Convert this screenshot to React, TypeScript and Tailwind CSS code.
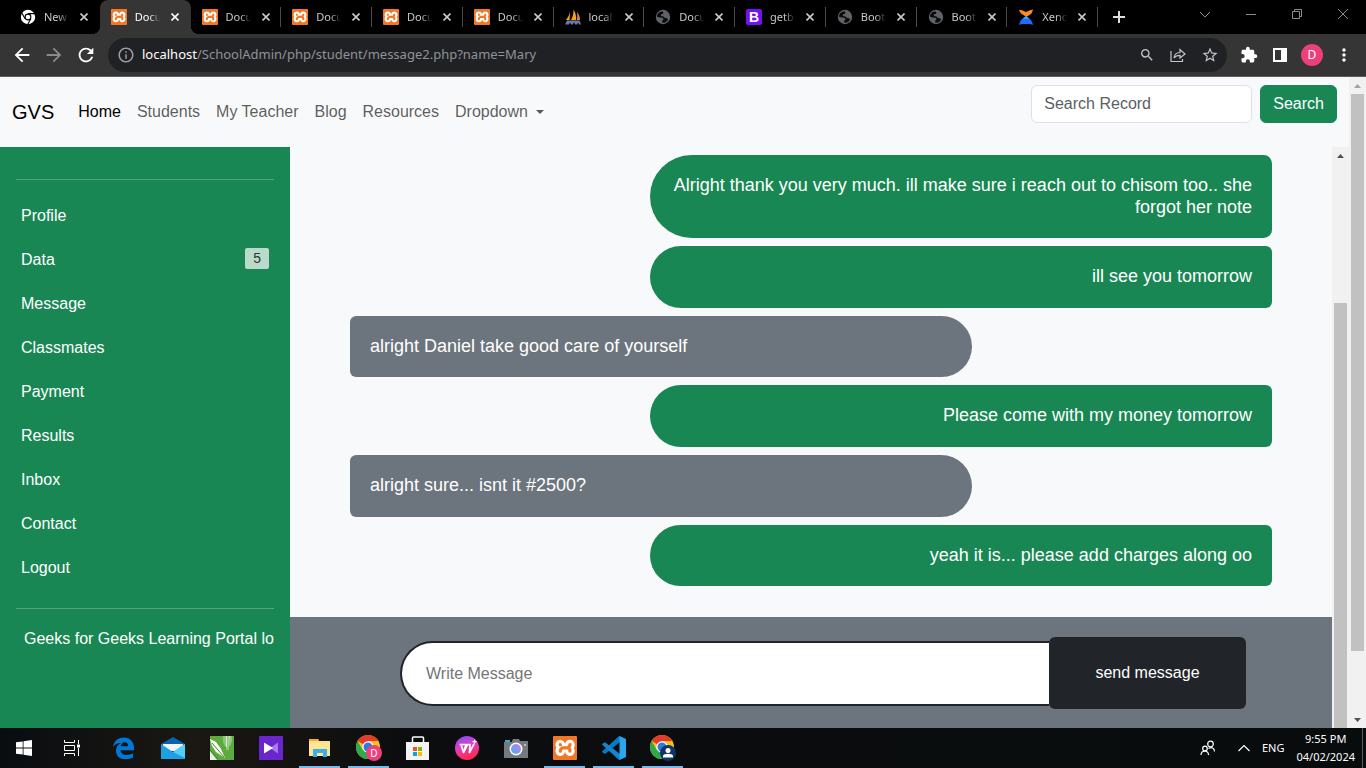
import React from "react";
import type { ReactNode } from "react";
import { MdArrowBack, MdArrowForward, MdExtension, MdInfoOutline, MdMoreVert, MdRefresh, MdSearch, MdStarBorder } from "react-icons/md";
import { SiXampp } from "react-icons/si";

const XamppIcon = ({ className }: { className: string }) => (
  <span className={`relative block overflow-hidden rounded-xs bg-white ${className}`}>
    <SiXampp className="size-full scale-110 text-[#f37623]" />
  </span>
);

const ChromeMono = () => (
  <svg viewBox="0 0 16 16" className="size-4">
    <circle cx="8" cy="8" r="7.2" fill="#fff" />
    <circle cx="8" cy="8" r="3.4" fill="#000" />
    <circle cx="8" cy="8" r="2.3" fill="#fff" />
    <g stroke="#000" strokeWidth="1.1">
      <path d="M8 4.6h7.2M5.1 9.8 1.5 3.5M10.9 9.8l-3.5 6" />
    </g>
  </svg>
);

const Sails = () => (
  <svg viewBox="0 0 16 16" className="size-4">
    <path d="M5 2 4.6 11H.8C3 8.500 4.500 5.500 5 2Z" fill="#f89c0e" />
    <path d="M8.500 0.500c2 3 3 6.500 2.700 10.500H6c1.800-3 2.700-6.500 2.500-10.500Z" fill="#f6a11c" />
    <path d="M12 3c2 2 3 5 3 8h-3c.4-3 .4-5.500 0-8Z" fill="#e98a12" />
    <path d="M0 15.500 2 11.500h12.500l1.500 4h-2l-1-2-1 2h-2l-1-2.500-1 2.500H6l-1-2-1 2Z" fill="#6c78af" />
  </svg>
);

const Globe = () => (
  <svg viewBox="0 0 16 16" className="size-4">
    <circle cx="8" cy="8" r="7.2" fill="#5f6368" />
    <path d="M7.500 2.200c-3 .2-5.500 2.500-5.500 5.500l3 .8c1.500.2 3 .2 3.500 1.300.3 1-1.300 1.500-1.300 2.600l.1 1.400c2.500.3 4.700-1 5.700-3.300-.6-1-1.200-1.500-2.500-1.500-1.500-.2-1.500-1.500-3-1.700-1-.2-1.700-.4-1.700-1.300 0-1.200 2.500-.6 2.700-1.900Z" fill="#0a0a0a" />
  </svg>
);

const BootstrapIcon = () => (
  <span className="grid size-4 place-items-center rounded-xs bg-[#7411f4] font-['Liberation_Sans',sans-serif] text-sm font-bold leading-none text-white">B</span>
);

const XenderIcon = () => (
  <svg viewBox="0 0 16 16" className="size-4">
    <path d="M.8.800 4 1.200 8 3l4-1.800L15.200.500 13.500 4.500 8.500 8 3 4.500Z" fill="#ff8a1d" />
    <path d="m8 7 5 4 2.200 4.800L11.500 15h-7L.8 15.800 3 11Z" fill="#1f6bff" />
    <path d="m8 7 3.500 2.800h-7Z" fill="#41a8f5" />
  </svg>
);

type BrowserTab = { title: string; icon: ReactNode; active?: boolean; divider?: boolean };

const browserTabs: BrowserTab[] = [
  { title: "New", icon: <ChromeMono /> },
  { title: "Docu", icon: <XamppIcon className="size-4" />, active: true },
  { title: "Docu", icon: <XamppIcon className="size-4" />, divider: true },
  { title: "Docu", icon: <XamppIcon className="size-4" />, divider: true },
  { title: "Docu", icon: <XamppIcon className="size-4" />, divider: true },
  { title: "Docu", icon: <XamppIcon className="size-4" />, divider: true },
  { title: "local", icon: <Sails />, divider: true },
  { title: "Docu", icon: <Globe />, divider: true },
  { title: "getb", icon: <BootstrapIcon />, divider: true },
  { title: "Boot", icon: <Globe />, divider: true },
  { title: "Boot", icon: <Globe />, divider: true },
  { title: "Xend", icon: <XenderIcon />, divider: true },
];

const CloseGlyph = () => (
  <svg viewBox="0 0 8 8" className="size-2" stroke="currentColor" strokeWidth="1.600">
    <path d="m0.500.5 7 7m0-7-7 7" />
  </svg>
);

function TabStrip() {
  return (
    <header className="flex h-[34px] shrink-0 bg-black pl-[9px] text-[#c8c9cb]">
      <div className="flex min-w-0 max-w-[1089px] flex-1">
        {browserTabs.map((tab, i) => (
          <div
            key={i}
            className={`relative flex min-w-0 flex-1 items-center pl-[11px] ${tab.active ? "rounded-t-lg bg-[#353535] text-white" : ""}`}
          >
            {tab.icon}
            <span className="ml-2 w-7 whitespace-nowrap text-[11px] [mask-image:linear-gradient(to_right,black_50%,transparent_90%)]">{tab.title}</span>
            <button aria-label="Close tab" className="ml-2 shrink-0"><CloseGlyph /></button>
            {tab.divider && <span className="ml-auto h-5 w-px bg-[#4a4a4a]" />}
            {tab.active && (
              <>
                <span className="absolute -left-2 bottom-0 size-2 bg-[radial-gradient(circle_at_0_0,black_8px,#353535_8px)]" />
                <span className="absolute -right-2 bottom-0 size-2 bg-[radial-gradient(circle_at_100%_0,black_8px,#353535_8px)]" />
              </>
            )}
          </div>
        ))}
      </div>
      <button aria-label="New tab" className="ml-[15px] self-center text-[#dedede]">
        <svg viewBox="0 0 12 12" className="size-3" stroke="currentColor" strokeWidth="2"><path d="M6 0v12M0 6h12" /></svg>
      </button>
      <div className="ml-auto flex h-7 items-center text-[#8c8c8c]">
        {[
          ["Search tabs", "M1 4l5 5 5-5"],
          ["Minimize", "M1 6.500h10"],
          ["Restore", "M1.500 3.500h7v7h-7zM3.500 3.500v-2h7v7h-2"],
          ["Close", "M1 1l10 10M11 1 1 11"],
        ].map(([label, d]) => (
          <button key={label} aria-label={label} className="grid w-[46px] place-items-center">
            <svg viewBox="0 0 12 12" className="size-3" fill="none" stroke="currentColor"><path d={d} /></svg>
          </button>
        ))}
      </div>
    </header>
  );
}

function Toolbar() {
  return (
    <div className="flex h-[43px] shrink-0 items-center border-b border-[#5c5c60] bg-[#353535] pr-3 text-white">
      <div className="flex items-center gap-2.5 pl-[11px]">
        <button aria-label="Back"><MdArrowBack className="size-[22px]" /></button>
        <button aria-label="Forward" className="text-[#8b8b8b]"><MdArrowForward className="size-[22px]" /></button>
        <button aria-label="Reload"><MdRefresh className="size-[22px]" /></button>
      </div>
      <div className="ml-[11px] flex h-[34px] min-w-0 flex-1 items-center rounded-full bg-[#202124] pl-2 pr-2 text-[#9aa0a6]">
        <MdInfoOutline className="size-5 shrink-0 p-px" />
        <p className="ml-1.5 flex-1 truncate text-[13px] text-[#8f9397]"><span className="text-white">localhost</span>/SchoolAdmin/php/student/message2.php?name=Mary</p>
        <div className="flex items-center gap-[15px] text-[#c3c5c8]">
          <button aria-label="Zoom"><MdSearch className="size-4" /></button>
          <button aria-label="Share">
            <svg viewBox="0 0 16 16" className="size-4" fill="none" stroke="currentColor" strokeWidth="1.200">
              <path d="M1 4v10.500h11.500V12M4 11c.5-3.500 2.500-5.500 6-5.500V2.500L15 7l-5 4V8.300C7.500 8.300 5.500 9 4 11Z" />
            </svg>
          </button>
          <button aria-label="Bookmark"><MdStarBorder className="size-[18px]" /></button>
        </div>
      </div>
      <div className="ml-3 flex items-center gap-[11px]">
        <button aria-label="Extensions" className="p-px"><MdExtension className="size-[18px]" /></button>
        <button aria-label="Side panel" className="p-0.5">
          <svg viewBox="0 0 16 16" className="size-4"><path fill="currentColor" fillRule="evenodd" d="M1 1h14v14H1ZM3 3v10h6V3Z" /></svg>
        </button>
        <button aria-label="Account" className="size-[22px] rounded-full bg-[#ec407a] text-xs">D</button>
        <button aria-label="More"><MdMoreVert className="size-5" /></button>
      </div>
    </div>
  );
}

function ScrollArrow({ down, faint }: { down?: boolean; faint?: boolean }) {
  return (
    <svg viewBox="0 0 17 17" className={`size-[17px] shrink-0 ${faint ? "text-[#a3a3a3]" : "text-[#505050]"}`}>
      <path fill="currentColor" d={down ? "M5 7h7l-3.500 4Z" : "M5 11h7L8.500 7Z"} />
    </svg>
  );
}

function Navbar() {
  return (
    <nav className="flex h-[70px] shrink-0 items-center bg-[#f8f9fa] px-3 text-base text-black/65">
      <a href="#" className="mr-4 text-xl text-black">GVS</a>
      <a href="#" className="px-2 text-black">Home</a>
      <a href="#" className="px-2">Students</a>
      <a href="#" className="px-2">My Teacher</a>
      <a href="#" className="px-2">Blog</a>
      <a href="#" className="px-2">Resources</a>
      <button className="flex items-center gap-2 px-2">
        Dropdown
        <span className="border-x-4 border-t-4 border-x-transparent border-t-current" />
      </button>
      <form className="ml-auto flex gap-2 self-start pt-2" onSubmit={(e) => e.preventDefault()}>
        <input
          type="search"
          aria-label="Search Record"
          placeholder="Search Record"
          className="h-[38px] w-[221px] rounded-md border border-[#dee2e6] bg-white px-3 text-[#212529] placeholder:text-[#5b6066]"
        />
        <button className="h-[38px] rounded-md border border-[#198754] bg-[#198754] px-3 text-white">Search</button>
      </form>
    </nav>
  );
}

const menu = ["Profile", "Data", "Message", "Classmates", "Payment", "Results", "Inbox", "Contact", "Logout"];

function Sidebar() {
  return (
    <aside className="w-[290px] shrink-0 overflow-hidden bg-[#198754] px-4 pt-8 text-white">
      <hr className="mb-[14px] border-white/25" />
      <ul>
        {menu.map((item) => (
          <li key={item}>
            <a href="#" className="flex h-11 items-start justify-between px-[5px] py-2.5 leading-6">
              {item}
              {item === "Data" && <span className="rounded-xs bg-[#badbcc] px-2 text-sm leading-[21px] text-[#333]">5</span>}
            </a>
          </li>
        ))}
      </ul>
      <hr className="mt-[18px] mb-[18px] border-white/25" />
      <p className="overflow-hidden whitespace-nowrap pl-2 leading-6">Geeks for Geeks Learning Portal lo</p>
    </aside>
  );
}

const messages = [
  { mine: true, text: "Alright thank you very much. ill make sure i reach out to chisom too.. she forgot her note" },
  { mine: true, text: "ill see you tomorrow" },
  { mine: false, text: "alright Daniel take good care of yourself" },
  { mine: true, text: "Please come with my money tomorrow" },
  { mine: false, text: "alright sure... isnt it #2500?" },
  { mine: true, text: "yeah it is... please add charges along oo" },
];

function Chat() {
  return (
    <main className="flex min-w-0 flex-1 flex-col bg-[#f8f9fa]">
      <div className="flex min-h-0 flex-1 flex-col gap-2 overflow-hidden px-[60px] pt-2">
        {messages.map((m, i) => (
          <p
            key={i}
            className={`w-[622px] max-w-full p-5 text-lg leading-[1.2] text-white ${
              m.mine ? "self-end rounded-l-[50px] rounded-r-[10px] bg-[#198754] text-right" : "rounded-l-[10px] rounded-r-[50px] bg-[#6c757d]"
            }`}
          >
            {m.text}
          </p>
        ))}
      </div>
      <form className="flex h-[111px] shrink-0 items-start bg-[#6c757d] pl-[110px] pr-[86px] pt-5" onSubmit={(e) => e.preventDefault()}>
        <input
          type="text"
          aria-label="Write Message"
          placeholder="Write Message"
          className="mt-1 h-[65px] min-w-0 flex-1 rounded-l-[50px] border-2 border-r-0 border-[#212529] bg-white px-6 text-[#212529] placeholder:text-[#757575]"
        />
        <button className="h-[72px] w-[197px] rounded-md bg-[#212529] text-white">send message</button>
      </form>
    </main>
  );
}

const ChromeColor = ({ children }: { children: ReactNode }) => (
  <svg viewBox="0 0 26 26" className="size-[26px]">
    <circle cx="12" cy="12" r="12" fill="#fbc116" />
    <path d="M12 12 1.600 6A12 12 0 0 1 22.400 6H12Z" fill="#e33b2e" />
    <path d="M1.600 6A12 12 0 0 0 12 24L17.200 15 12 12 6.800 15Z" fill="#2da94f" />
    <circle cx="12" cy="12" r="5.700" fill="#fff" />
    <circle cx="12" cy="12" r="4.500" fill="#2c7be5" />
    {children}
  </svg>
);

const EdgeIcon = () => (
  <svg viewBox="0 0 24 24" className="size-6">
    <path fill="#0078d7" d="M1 11C2 5 6 1.500 12 1.500c6 0 10 4.500 10 10.500v2.200H8.500c.3 3.300 3 4.800 6.200 4.800 2.300 0 4.500-.6 6.300-1.700v4.300c-2 1.200-4.700 1.700-7.300 1.700C7.500 23.300 4 20 4 14.800c0-3.500 2-6.500 5-8C5.500 7.200 2.500 8.500 1 11Zm7.700-.8h7.500c0-2.500-1.300-4-3.600-4-2.100 0-3.500 1.700-3.900 4Z" />
  </svg>
);

const MailIcon = () => (
  <svg viewBox="0 0 24 24" className="size-6">
    <path d="M0 8 12 1l12 7v4H0Z" fill="#0a63ad" />
    <path d="M2 8h20v7H2Z" fill="#f3f3f3" />
    <path d="M0 8l12 8 12-8v15H0Z" fill="#1ea0e6" />
    <path d="m12 16 12-8v14Z" fill="#4fd0f4" />
  </svg>
);

const CorelIcon = () => (
  <svg viewBox="0 0 24 24" className="size-6">
    <path d="M0 0h24v24H0Z" fill="#5dab3c" />
    <path d="M13 0h9c1 5-1 9-3 11v3h-3v-3c-2-2-4-6-3-11Z" fill="#8fc77a" />
    <path d="M16 0h1v11h-1ZM19 0h1l-2 11Z" fill="#d7edcf" />
    <path d="m0 3 6 3 5 7 4 9-9-6-4-6Z" fill="#fff" />
    <path d="m2 7 12 14M0 14l8 9" stroke="#3f8525" fill="none" />
    <path d="M0 15l7 9H0Z" fill="#e8f4e3" />
  </svg>
);

const PlayerIcon = () => (
  <svg viewBox="0 0 24 24" className="size-6">
    <rect width="24" height="24" rx="1" fill="#6a26cd" />
    <path d="m19 6.500-8 5.500 8 5.500Z" fill="#a67be6" />
    <path d="M5 6.500v11l9-5.500Z" fill="#fff" />
  </svg>
);

const FolderIcon = () => (
  <svg viewBox="0 0 24 24" className="size-6">
    <path d="M1 3h9l1 2h11v15H1Z" fill="#ffe08a" />
    <path d="M1 3h9l1 2H1Z" fill="#f4b02c" />
    <path d="M1 7h21v13H1Z" fill="#ffe694" />
    <path d="M5 13h14v8h-4v-4H9v4H5Z" fill="#39b0e8" />
  </svg>
);

const StoreIcon = () => (
  <svg viewBox="0 0 24 24" className="size-6">
    <path d="M6.500 7V2q0-1 1-1h9q1 0 1 1v5" fill="none" stroke="#fff" strokeWidth="1.500" />
    <path d="M0 6h23v18H0Z" fill="#f3f3f3" />
    <path d="M7 11h4v4H7Z" fill="#f25022" />
    <path d="M12 11h4v4h-4Z" fill="#7fba00" />
    <path d="M7 16h4v4H7Z" fill="#00a4ef" />
    <path d="M12 16h4v4h-4Z" fill="#ffb900" />
  </svg>
);

const WpsIcon = () => (
  <svg viewBox="0 0 24 24" className="size-6">
    <defs>
      <linearGradient id="wps" x1="0" y1="0" x2="0.300" y2="1">
        <stop offset="0" stopColor="#7a4dff" />
        <stop offset="0.500" stopColor="#e03fc4" />
        <stop offset="1" stopColor="#ff2a4d" />
      </linearGradient>
    </defs>
    <circle cx="12" cy="12" r="12" fill="url(#wps)" />
    <path d="M4.500 8.500h6.500L8.500 16.500 6 8.500M8.500 16.500 12.500 8.500H15L14.500 16.500 19 8" fill="none" stroke="#fff" strokeWidth="1.700" strokeLinejoin="round" />
    <path d="m19.500 3 .7 2 2 .7-2 .7-.7 2-.7-2-2-.7 2-.7Z" fill="#fff" />
  </svg>
);

const CameraIcon = () => (
  <svg viewBox="0 0 24 24" className="size-6">
    <defs>
      <linearGradient id="lens" x1="1" y1="0" x2="0" y2="1">
        <stop offset="0" stopColor="#d977e8" />
        <stop offset="1" stopColor="#35b8f2" />
      </linearGradient>
    </defs>
    <path d="M1 4h5v3H1Z" fill="#39a6dc" />
    <path d="M8 5l1-2h6l1 2h8v17H0V6h8Z" fill="#737a80" />
    <circle cx="12" cy="13" r="6.500" fill="#fff" />
    <circle cx="12" cy="13" r="5" fill="url(#lens)" />
    <path d="M20 8h2v2h-2Z" fill="#b9bec2" />
  </svg>
);

const CodeIcon = () => (
  <svg viewBox="0 0 24 24" className="size-6">
    <path d="M18 0v6L3 18l-1.500-.8L0 15.500 16.500.5Z" fill="#0b78c2" />
    <path d="M0 8.500 1.500 7 3 6.200 18 18v6l-1.500-.5Z" fill="#1187d2" />
    <path d="M17.500 0 24 3v18l-6.500 3Z" fill="#2ba5f0" />
  </svg>
);

const apps: { name: string; icon: ReactNode; open?: boolean }[] = [
  { name: "Edge", icon: <EdgeIcon /> },
  { name: "Mail", icon: <MailIcon /> },
  { name: "CorelDRAW", icon: <CorelIcon /> },
  { name: "Video player", icon: <PlayerIcon /> },
  { name: "File Explorer", icon: <FolderIcon />, open: true },
  {
    name: "Chrome, Daniel",
    open: true,
    icon: (
      <ChromeColor>
        <circle cx="18" cy="18" r="8" fill="#ec407a" />
        <text x="18" y="21.500" textAnchor="middle" fontSize="10" fill="#fff">D</text>
      </ChromeColor>
    ),
  },
  { name: "Store", icon: <StoreIcon /> },
  { name: "WPS Office", icon: <WpsIcon /> },
  { name: "Camera", icon: <CameraIcon /> },
  { name: "XAMPP", icon: <XamppIcon className="size-6" />, open: true },
  { name: "Visual Studio Code", icon: <CodeIcon />, open: true },
  {
    name: "Chrome",
    open: true,
    icon: (
      <ChromeColor>
        <circle cx="18" cy="18" r="8" fill="#0e3566" />
        <circle cx="18" cy="15.500" r="2.500" fill="#fff" />
        <path d="M13 22.500v-1.500c0-3 10-3 10 0v1.500Z" fill="#fff" />
      </ChromeColor>
    ),
  },
];

function Taskbar() {
  return (
    <footer className="flex h-10 shrink-0 items-center bg-[linear-gradient(to_right,#090d10,#1b1713_14%,#0b0d0e_30%,#090c0d)] text-white">
      <button aria-label="Start" className="grid w-12 place-items-center">
        <svg viewBox="0 0 16 16" className="size-4" fill="currentColor"><path d="M0 2.300 6.700 1.400v6.200H0ZM7.500 1.300 16 0v7.600H7.500ZM0 8.400h6.700v6.200L0 13.700ZM7.500 8.400H16V16l-8.500-1.200Z" /></svg>
      </button>
      <button aria-label="Task view" className="mr-[3px] grid w-12 place-items-center">
        <svg viewBox="0 0 16 16" className="size-4" fill="none" stroke="currentColor">
          <path d="M.5 0v2.500h10V0M.5 5.500h10v5H.5ZM.5 16v-2.500h10V16M14.500 0v4M14.500 8v8" />
          <path d="M13 4.500h3v3h-3Z" fill="currentColor" stroke="none" />
        </svg>
      </button>
      {apps.map((app) => (
        <button
          key={app.name}
          aria-label={app.name}
          className={`relative grid h-10 w-[49px] place-items-center ${app.open ? "after:absolute after:inset-x-1 after:bottom-0 after:h-0.5 after:bg-[#76b9ed]" : ""}`}
        >
          {app.icon}
        </button>
      ))}
      <div className="ml-auto flex items-center gap-3 pr-[7px] text-[11px]">
        <svg viewBox="0 0 16 16" className="mr-2.5 size-4" fill="none" stroke="currentColor" strokeWidth="1.200">
          <circle cx="10.500" cy="4" r="2.800" />
          <circle cx="5" cy="8.500" r="2.300" />
          <path d="M1 15c0-5 7.500-5 7.500 0M8.500 8.500c3-2 6-.5 6 3" />
        </svg>
        <svg viewBox="0 0 12 12" className="size-3" fill="none" stroke="currentColor" strokeWidth="1.200"><path d="m0.500 9 5.500-5.500L11.500 9" /></svg>
        <span>ENG</span>
        <p className="text-center leading-[18px]">9:55 PM<br />04/02/2024</p>
      </div>
      <span className="h-10 w-px bg-[#5a5c5d]" />
      <span className="w-[3px]" />
    </footer>
  );
}

export default function App() {
  return (
    <div className="flex h-screen flex-col overflow-hidden font-['Noto_Sans',sans-serif]">
      <TabStrip />
      <Toolbar />
      <div className="flex min-h-0 flex-1 bg-[#f8f9fa] font-['Liberation_Sans',Arial,sans-serif]">
        <div className="flex min-w-0 flex-1 flex-col">
          <Navbar />
          <div className="flex min-h-0 flex-1">
            <Sidebar />
            <Chat />
            <div className="flex w-[17px] shrink-0 flex-col bg-[#f1f1f1]">
              <ScrollArrow />
              <div className="mx-0.5 mt-[139px] flex-1 bg-[#c1c1c1]" />
            </div>
          </div>
        </div>
        <div className="flex w-[17px] shrink-0 flex-col bg-[#f1f1f1]">
          <ScrollArrow faint />
          <div className="mx-0.5 mb-[60px] flex-1 bg-[#c1c1c1]" />
          <ScrollArrow down />
        </div>
      </div>
      <Taskbar />
    </div>
  );
}
